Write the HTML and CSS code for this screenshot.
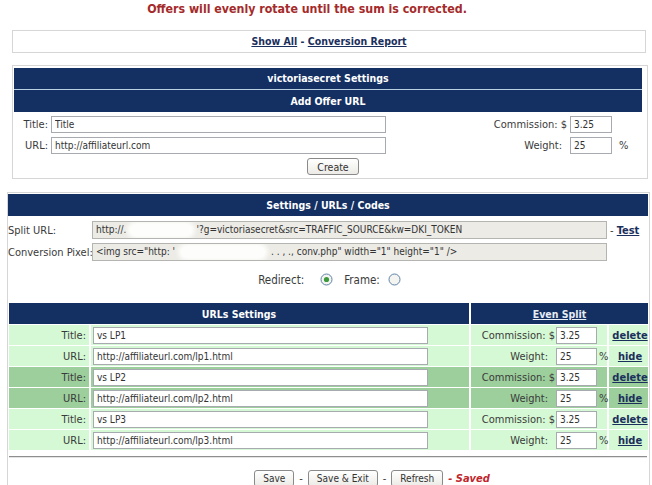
FILE: index.html
```html
<!DOCTYPE html>
<html>
<head>
<meta charset="utf-8">
<title>victoriasecret Settings</title>
<link rel="stylesheet" href="styles.css">
</head>
<body>
<p class="notice">Offers will evenly rotate until the sum is corrected.</p>

<div class="nav"><a href="#">Show All</a> - <a href="#">Conversion Report</a></div>

<div class="settings">
  <div class="hd">victoriasecret Settings</div>
  <div class="hd hd-sub">Add Offer URL</div>
  <div class="offer-form">
    <span class="lbl">Title:</span>
    <input class="txt" type="text" value="Title">
    <span class="lbl">Commission: $</span>
    <input class="txt" type="text" value="3.25">
    <span></span>
    <span class="lbl">URL:</span>
    <input class="txt" type="text" value="http://affiliateurl.com">
    <span class="lbl lbl-weight">Weight:</span>
    <input class="txt" type="text" value="25">
    <span class="pct">%</span>
    <div class="create-row"><button class="btn" type="button">Create</button></div>
  </div>
</div>

<div class="codes">
  <div class="hd hd-codes">Settings / URLs / Codes</div>
  <div class="code-grid">
    <span class="code-lbl">Split URL:</span>
    <div class="ro">http://.<span class="blur blur-a"></span>'?g=victoriasecret&amp;src=TRAFFIC_SOURCE&amp;kw=DKI_TOKEN</div>
    <span class="test">- <a href="#">Test</a></span>
    <span class="code-lbl">Conversion Pixel:</span>
    <div class="ro">&lt;img src="http: '<span class="blur blur-b"></span>. . , ., conv.php" width="1" height="1" /&gt;</div>
    <span></span>
  </div>
  <div class="mode">
    <span>Redirect:</span>
    <svg class="radio" width="13" height="13" viewBox="0 0 13 13"><circle cx="6.5" cy="6.5" r="5.5" fill="#f4f4f0" stroke="#5f83a8"/><circle cx="6.5" cy="6.5" r="2.6" fill="#3c9a3c"/></svg>
    <span class="frame">Frame:</span>
    <svg class="radio radio-off" width="13" height="13" viewBox="0 0 13 13"><circle cx="6.5" cy="6.5" r="5.5" fill="#f4f4f0" stroke="#5f83a8"/></svg>
  </div>

  <table class="urls">
    <colgroup>
      <col class="col-lbl"><col class="col-in"><col class="col-split"><col class="col-link">
    </colgroup>
    <thead>
      <tr><th colspan="2">URLs Settings</th><th colspan="2" class="even"><a href="#">Even Split</a></th></tr>
    </thead>
    <tbody>
      <tr class="light">
        <td class="c-lbl">Title:</td><td class="c-in"><input class="txt" type="text" value="vs LP1"></td>
        <td><div class="split"><span>Commission: $</span><input class="txt num" type="text" value="3.25"><span class="p"></span></div></td>
        <td class="c-link"><a href="#">delete</a></td>
      </tr>
      <tr class="light">
        <td class="c-lbl">URL:</td><td class="c-in"><input class="txt" type="text" value="http://affiliateurl.com/lp1.html"></td>
        <td><div class="split"><span class="w">Weight:</span><input class="txt num" type="text" value="25"><span class="p">%</span></div></td>
        <td class="c-link"><a href="#">hide</a></td>
      </tr>
      <tr class="dark">
        <td class="c-lbl">Title:</td><td class="c-in"><input class="txt" type="text" value="vs LP2"></td>
        <td><div class="split"><span>Commission: $</span><input class="txt num" type="text" value="3.25"><span class="p"></span></div></td>
        <td class="c-link"><a href="#">delete</a></td>
      </tr>
      <tr class="dark">
        <td class="c-lbl">URL:</td><td class="c-in"><input class="txt" type="text" value="http://affiliateurl.com/lp2.html"></td>
        <td><div class="split"><span class="w">Weight:</span><input class="txt num" type="text" value="25"><span class="p">%</span></div></td>
        <td class="c-link"><a href="#">hide</a></td>
      </tr>
      <tr class="light">
        <td class="c-lbl">Title:</td><td class="c-in"><input class="txt" type="text" value="vs LP3"></td>
        <td><div class="split"><span>Commission: $</span><input class="txt num" type="text" value="3.25"><span class="p"></span></div></td>
        <td class="c-link"><a href="#">delete</a></td>
      </tr>
      <tr class="light">
        <td class="c-lbl">URL:</td><td class="c-in"><input class="txt" type="text" value="http://affiliateurl.com/lp3.html"></td>
        <td><div class="split"><span class="w">Weight:</span><input class="txt num" type="text" value="25"><span class="p">%</span></div></td>
        <td class="c-link"><a href="#">hide</a></td>
      </tr>
    </tbody>
  </table>

  <hr class="rule">

  <div class="actions">
    <button class="btn" type="button">Save</button>
    <span>-</span>
    <button class="btn" type="button">Save &amp; Exit</button>
    <span>-</span>
    <button class="btn" type="button">Refresh</button>
    <span class="saved">- Saved</span>
  </div>
</div>
</body>
</html>
```

FILE: styles.css
```css
* { box-sizing: border-box; }

body {
  margin: 0;
  background: #fff;
  color: #3a3a3a;
  font-family: "DejaVu Sans Condensed", "DejaVu Sans", sans-serif;
  font-size: 11px;
}

a { color: #1b2f5c; font-weight: bold; text-decoration: underline; }

.notice {
  margin: 0;
  padding: 2px 38px 0 0;
  text-align: center;
  color: #a52a2a;
  font-weight: bold;
  font-size: 12.3px;
  line-height: 15px;
}

.nav {
  margin: 13px 6px 0 12px;
  height: 23px;
  line-height: 21px;
  border: 1px solid #d6d6d6;
  text-align: center;
  font-weight: bold;
  font-size: 10.5px;
  color: #1b2f5c;
}

.settings {
  margin: 12px 4px 0 12px;
  border: 1px solid #d6d6d6;
  padding: 2px 5px 3px 1px;
}

.hd {
  background: #143063;
  color: #fff;
  font-weight: bold;
  font-size: 10.5px;
  text-align: center;
  height: 21px;
  line-height: 21px;
}

.hd-sub {
  border-top: 1px solid #b9d0e2;
  height: 23px;
  line-height: 22px;
}

.offer-form {
  display: grid;
  grid-template-columns: 36px 336px 1fr 43px 30px;
  row-gap: 4px;
  align-items: center;
  padding-top: 4px;
}

.lbl { text-align: right; padding-right: 2px; white-space: nowrap; }
.lbl-weight { padding-right: 7px; }
.pct { padding-left: 7px; }

.txt {
  height: 17px;
  border: 1px solid #a7abb0;
  background: #fff;
  padding: 0 3px;
  font-family: inherit;
  font-size: 10px;
  color: #333;
  width: 100%;
}

.offer-form .txt { margin-left: 1px; width: calc(100% - 1px); }

.create-row {
  grid-column: 1 / -1;
  display: flex;
  justify-content: center;
  padding-left: 10px;
}

.btn {
  height: 17px;
  padding: 0 9px;
  border: 1px solid #8a8a8a;
  border-radius: 3px;
  background: linear-gradient(#ffffff, #ecebe6);
  font-family: inherit;
  font-size: 10.5px;
  color: #333;
}

.codes {
  margin: 13px 2px 0 7px;
  border: 1px solid #d6d6d6;
  border-bottom: none;
  padding: 1px 1px 0 0;
}

.hd-codes { height: 22px; line-height: 22px; }

.code-grid {
  display: grid;
  grid-template-columns: 84px 515px 1fr;
  row-gap: 4px;
  align-items: center;
  padding-top: 5px;
}

.code-lbl { white-space: nowrap; }

.ro {
  height: 18px;
  line-height: 16px;
  border: 1px solid #b4b4b0;
  background: #ecebe6;
  padding: 0 3px;
  white-space: nowrap;
  overflow: hidden;
  font-size: 10px;
  color: #333;
}

.blur {
  display: inline-block;
  height: 12px;
  vertical-align: middle;
  background: #fdfdfb;
  box-shadow: 0 0 4px 3px #fdfdfb;
  border-radius: 6px;
}
.blur-a { width: 62px; margin: 0 4px; }
.blur-b { width: 84px; margin: 0 6px; }

.test { padding-left: 3px; white-space: nowrap; }

.mode {
  display: flex;
  align-items: center;
  justify-content: center;
  height: 17px;
  margin-top: 10px;
  padding-left: 3px;
  font-size: 11.5px;
}
.mode .radio { margin-left: 16px; }
.mode .frame { margin-left: 11px; }
.mode .radio-off { margin-left: 8px; }

.urls {
  width: 643px;
  table-layout: fixed;
  margin: 14px 0 0 -1px;
  border-collapse: separate;
  border-spacing: 2px 1px;
}
.col-lbl { width: 80px; }
.col-in { width: 378px; }
.col-split { width: 136px; }
.col-link { width: 39px; }

.urls th {
  background: #143063;
  color: #fff;
  font-weight: bold;
  font-size: 10.5px;
  height: 21px;
  padding: 0;
}
.urls th a { color: #e6ecf4; }

.urls td { height: 20px; padding: 0; }
.light td { background: #d4f9d4; }
.dark td { background: #9ccf9c; }

.c-lbl { text-align: right; padding-right: 3px !important; }
.c-in .txt { width: 335px; margin-left: 2px; display: block; }

.split {
  display: flex;
  justify-content: flex-end;
  align-items: center;
  white-space: nowrap;
}
.split .num { width: 41px; margin-left: 1px; }
.split .w { padding-right: 7px; }
.split .p { width: 10px; padding-left: 2px; }

.c-link { text-align: center; padding-left: 3px !important; }

.rule {
  margin: 5px 1px 0 1px;
  border: none;
  border-top: 1px solid #8e8e8e;
  border-bottom: 1px solid #e4e4e4;
  height: 0;
}

.actions {
  display: flex;
  justify-content: center;
  align-items: center;
  gap: 5px;
  margin-top: 12px;
  padding-left: 88px;
}
.actions .btn { height: 17px; padding: 0 8px; font-size: 10px; }
.saved { color: #c0262c; font-weight: bold; font-style: italic; }
```
